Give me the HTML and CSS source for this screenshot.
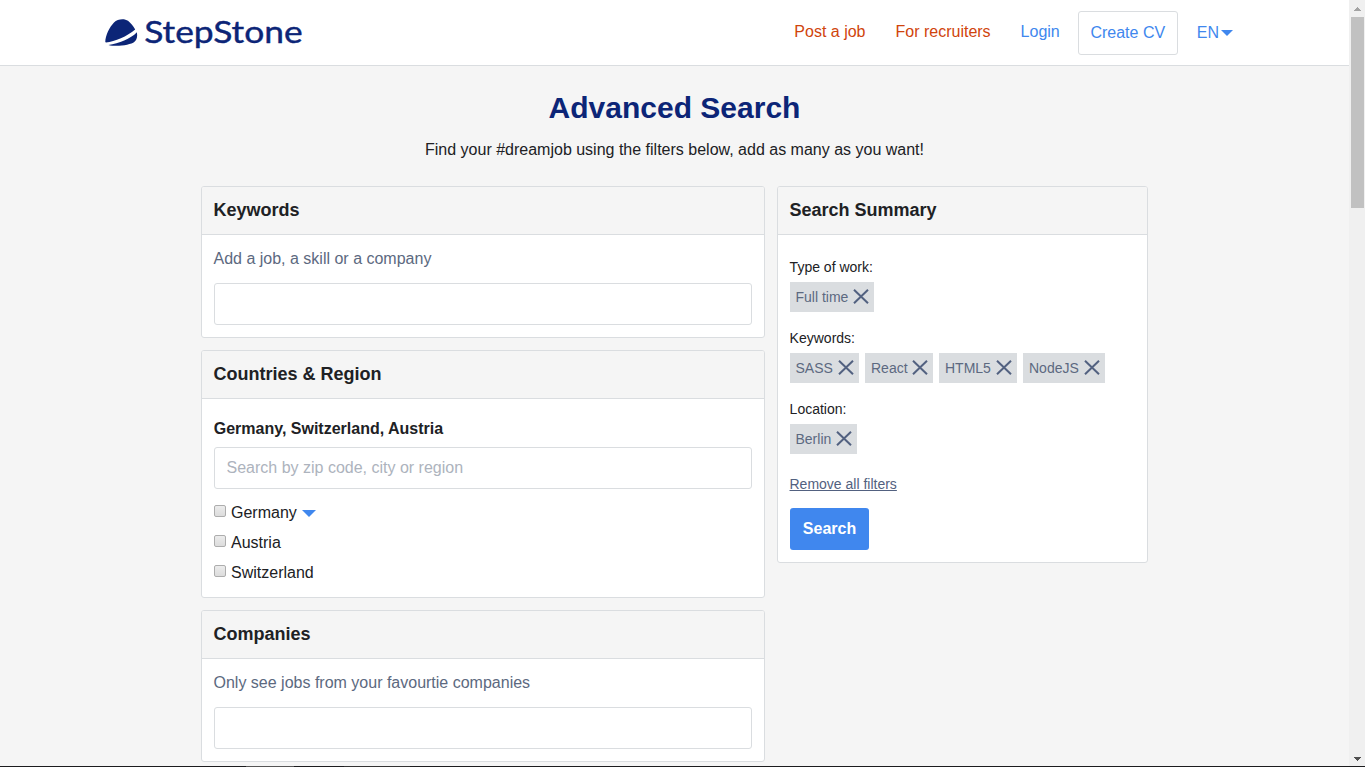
FILE: index.html
```
<!DOCTYPE html>
<html lang="en">
<head>
<meta charset="utf-8">
<title>StepStone - Advanced Search</title>
<link rel="stylesheet" href="styles.css">
</head>
<body>
<svg class="defs" width="0" height="0">
  <symbol id="close" viewBox="0 0 16 15"><path d="M1 .8 15 14.200M15 .8 1 14.200" fill="none" stroke="#526180" stroke-width="2"/></symbol>
</svg>
<div class="viewport">
  <div class="page">
    <header class="header">
      <a class="logo">
        <svg width="210" height="56" viewBox="0 -14 210 56">
          <path fill="#0c2577" d="M.3 24C.3 17.500 4.500 9 9 4.400C12.500.8 19.500.2 23 2.800C26 5.200 28.300 8.300 30.200 11.500C22 18.500 10 23.500 1 24.600Z"/>
          <path fill="#0c2577" d="M31.900 14.200C32.600 18.500 32 21.500 29.500 23.800C25.500 27.300 11 29 3.500 27C14 25.500 25.500 20.800 31.900 14.200Z"/>
          <text class="logo-text" x="39.200" y="25" textLength="158.500" lengthAdjust="spacingAndGlyphs">StepStone</text>
        </svg>
      </a>
      <nav class="nav">
        <a class="accent">Post a job</a>
        <a class="accent">For recruiters</a>
        <a>Login</a>
        <a class="cv">Create CV</a>
        <a class="lang">EN<svg class="caret" width="12" height="6" viewBox="0 0 12 6"><path d="M0 0H12L6 6Z"/></svg></a>
      </nav>
    </header>
    <main class="main">
      <h1 class="title">Advanced Search</h1>
      <p class="intro">Find your #dreamjob using the filters below, add as many as you want!</p>
      <div class="columns">
        <div class="filters">
          <section class="card">
            <h2 class="card-head">Keywords</h2>
            <div class="card-body">
              <p class="hint">Add a job, a skill or a company</p>
              <input class="field" type="text">
            </div>
          </section>
          <section class="card">
            <h2 class="card-head">Countries &amp; Region</h2>
            <div class="card-body">
              <h3 class="subhead">Germany, Switzerland, Austria</h3>
              <input class="field" type="text" placeholder="Search by zip code, city or region">
              <div class="options">
                <label class="option"><input class="check" type="checkbox">Germany<svg class="caret wide" width="14" height="7" viewBox="0 0 14 7"><path d="M0 0H14L7 7Z"/></svg></label>
                <label class="option"><input class="check" type="checkbox">Austria</label>
                <label class="option"><input class="check" type="checkbox">Switzerland</label>
              </div>
            </div>
          </section>
          <section class="card">
            <h2 class="card-head">Companies</h2>
            <div class="card-body">
              <p class="hint">Only see jobs from your favourtie companies</p>
              <input class="field" type="text">
            </div>
          </section>
        </div>
        <aside class="card summary">
          <h2 class="card-head">Search Summary</h2>
          <div class="summary-body">
            <p class="label">Type of work:</p>
            <div class="chips"><span class="chip">Full time<svg class="x"><use href="#close"/></svg></span></div>
            <p class="label">Keywords:</p>
            <div class="chips keywords">
              <span class="chip">SASS<svg class="x"><use href="#close"/></svg></span>
              <span class="chip">React<svg class="x"><use href="#close"/></svg></span>
              <span class="chip">HTML5<svg class="x"><use href="#close"/></svg></span>
              <span class="chip">NodeJS<svg class="x"><use href="#close"/></svg></span>
            </div>
            <p class="label">Location:</p>
            <div class="chips"><span class="chip">Berlin<svg class="x"><use href="#close"/></svg></span></div>
            <a class="remove">Remove all filters</a>
            <button class="search">Search</button>
          </div>
        </aside>
      </div>
    </main>
  </div>
  <div class="scrollbar">
    <svg width="7" height="4" viewBox="0 0 7 4" shape-rendering="crispEdges"><path fill="#a3a3a3" d="M0 4H7L3.500 0Z"/></svg>
    <div class="thumb"></div>
    <svg width="7" height="4" viewBox="0 0 7 4" shape-rendering="crispEdges"><path fill="#505050" d="M0 0H7L3.500 4Z"/></svg>
  </div>
</div>
<div class="bottom-edge"></div>
</body>
</html>
```
FILE: styles.css
```
* { box-sizing: border-box; }
body {
  margin: 0;
  height: 767px;
  overflow: hidden;
  background: #f5f5f5;
  color: #202124;
  font: 16px/24px "Liberation Sans", Arial, sans-serif;
}
h1, h2, h3, p { margin: 0; }
.defs { display: block; }
.viewport { display: flex; height: 766px; overflow: hidden; }
.page { flex: 1; }
.bottom-edge {
  height: 1px;
  background: linear-gradient(90deg, #1c1c1e 246px, #555 246px, #555 294px, #1c1c1e 294px, #1c1c1e 344px, #333 344px, #333 410px, #1c1c1e 410px);
}

.header {
  display: flex;
  justify-content: space-between;
  height: 66px;
  padding: 0 116px 0 105px;
  background: #fff;
  border-bottom: 1px solid #dadde0;
}
.logo { padding-top: 4px; }
.logo svg { display: block; }
.logo-text { font: 400 31px Lato, sans-serif; fill: #0c2577; stroke: #0c2577; stroke-width: .4px; }
.nav { display: flex; align-items: flex-start; padding-top: 11px; color: #4087ee; }
.nav a { padding-top: 9px; margin-right: 30px; }
.nav .accent { color: #d0440c; }
.nav a:nth-child(3) { margin-right: 18px; }
.nav .cv {
  width: 100px;
  height: 44px;
  margin-right: 19px;
  text-align: center;
  border: 1px solid #dadde0;
  border-radius: 3px;
}
.nav .lang { display: flex; align-items: center; gap: 2px; margin: 0; padding-top: 10px; }
.caret { fill: #4087ee; }

.title {
  padding-top: 22px;
  color: #0c2577;
  font-size: 30px;
  line-height: 40px;
  text-align: center;
}
.intro { margin-top: 10px; text-align: center; }
.columns {
  display: flex;
  align-items: flex-start;
  gap: 12px;
  width: 947px;
  margin: 24px auto 0;
}
.filters { display: flex; flex-direction: column; gap: 12px; width: 564px; }
.card { background: #fff; border: 1px solid #dadde0; border-radius: 3px; }
.summary { width: 371px; height: 377px; }
.card-head {
  height: 48px;
  padding: 0 11.500px;
  background: #f5f5f5;
  border-bottom: 1px solid #dadde0;
  border-radius: 2px 2px 0 0;
  font-size: 18px;
  line-height: 46px;
}
.card-body { padding: 12px; }
.hint { color: #5c6980; margin-bottom: 12px; text-indent: -.5px; }
.subhead { padding-top: 6px; margin-bottom: 6px; font-size: 16px; line-height: 24px; text-indent: -.3px; }
.field {
  display: block;
  width: 538px;
  height: 42px;
  padding: 0 11.500px;
  border: 1px solid #dadde0;
  border-radius: 3px;
  background: #fff;
  font: inherit;
}
.field::placeholder { color: #adb3bd; }
.options { padding-top: 9px; margin-bottom: -3px; }
.option { display: flex; align-items: center; height: 30px; }
.check {
  appearance: none;
  width: 12px;
  height: 12px;
  margin: -4px 5px 0 0;
  border: 1px solid #adadad;
  border-radius: 2px;
  background: linear-gradient(#ececec, #dcdcdc);
}
.caret.wide { margin: 0 0 0 5px; }

.summary-body { display: flex; flex-direction: column; align-items: flex-start; padding: 20px 12px 12px; font-size: 14px; }
.label { height: 24px; margin-bottom: 3px; text-indent: -.4px; }
.chips { display: flex; gap: 6px; margin-bottom: 14px; }
.chip {
  display: flex;
  align-items: center;
  justify-content: space-between;
  height: 30px;
  padding: 0 5px 0 5.500px;
  background: #dadde0;
  color: #5c6980;
}
.keywords .chip { padding-left: 6px; }
.keywords .chip:nth-child(1) { width: 69px; padding-left: 5.500px; }
.keywords .chip:nth-child(2) { width: 68px; }
.keywords .chip:nth-child(3) { width: 78px; }
.keywords .chip:nth-child(4) { width: 82px; }
.x { flex: none; width: 16px; height: 15px; margin: -2px 0 0 4.500px; }
.keywords .x { margin-left: 0; }
.remove { margin: 4px 0 0 -.5px; color: #526180; text-decoration: underline; }
.search {
  width: 79px;
  height: 42px;
  margin-top: 12px;
  padding: 0;
  border: 0;
  border-radius: 3px;
  background: #4087ee;
  color: #fff;
  font: bold 16px "Liberation Sans", Arial, sans-serif;
}

.scrollbar {
  display: flex;
  flex-direction: column;
  align-items: center;
  width: 16px;
  padding: 7px 0 5px;
  background: #f0f0f0;
}
.thumb { width: 13px; height: 191px; margin: 6px 0 auto; background: #c1c1c1; }
```
